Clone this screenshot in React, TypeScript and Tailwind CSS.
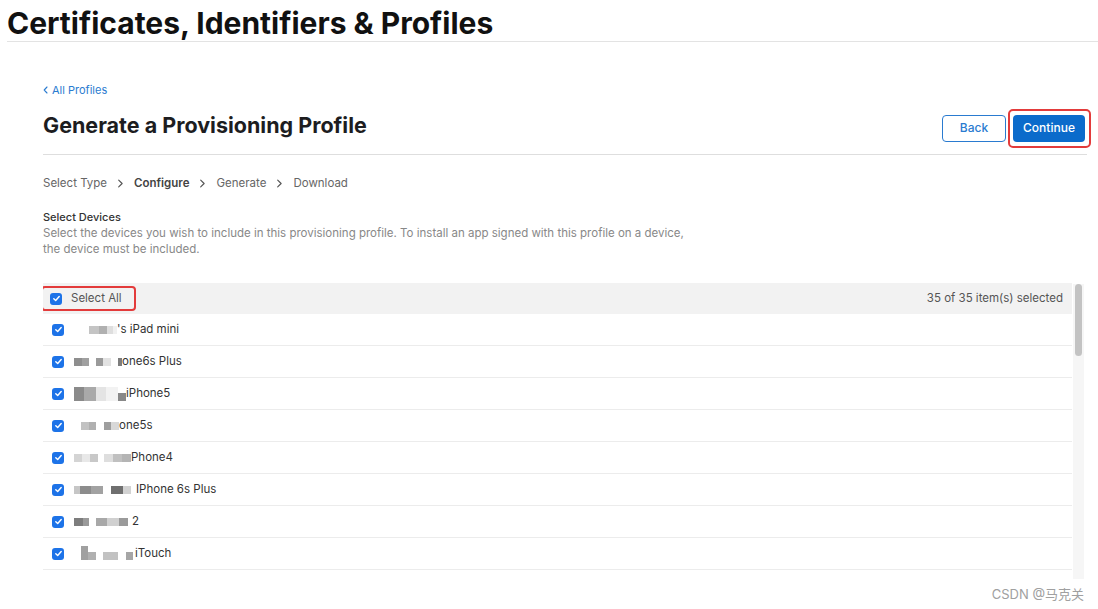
import React from "react";

type Block = { w: number; h?: number; c: string; dy?: number };

// pixelated redaction blocks in front of each device name
const devices: { blocks: Block[]; name: string }[] = [
  { blocks: [{ w: 15, c: "#ffffff" }, { w: 10, c: "#c4c4c4" }, { w: 8, c: "#b0b0b0" }, { w: 6, c: "#dedede" }, { w: 4, c: "#f0f0f0" }], name: "'s iPad mini" },
  { blocks: [{ w: 8, c: "#8e8e8e" }, { w: 7, c: "#a0a0a0" }, { w: 7, c: "#ffffff" }, { w: 7, c: "#9a9a9a" }, { w: 8, c: "#e2e2e2" }, { w: 7, c: "#ffffff" }, { w: 4, c: "#7d7d7d" }], name: "one6s Plus" },
  { blocks: [{ w: 10, h: 14, c: "#8a8a8a" }, { w: 12, h: 14, c: "#a9a9a9" }, { w: 10, h: 14, c: "#e4e4e4" }, { w: 12, h: 14, c: "#f2f2f2" }, { w: 8, h: 8, c: "#888888", dy: 6 }], name: "iPhone5" },
  { blocks: [{ w: 7, c: "#ffffff" }, { w: 8, c: "#c2c2c2" }, { w: 7, c: "#b0b0b0" }, { w: 8, c: "#ffffff" }, { w: 7, c: "#9e9e9e" }, { w: 8, c: "#d8d8d8" }], name: "one5s" },
  { blocks: [{ w: 8, c: "#d4d4d4" }, { w: 8, c: "#e8e8e8" }, { w: 8, c: "#c8c8c8" }, { w: 6, c: "#ffffff" }, { w: 9, c: "#dedede" }, { w: 9, c: "#c0c0c0" }, { w: 9, c: "#b4b4b4" }], name: "Phone4" },
  { blocks: [{ w: 6, c: "#c6c6c6" }, { w: 11, c: "#8c8c8c" }, { w: 12, c: "#a2a2a2" }, { w: 8, c: "#ffffff" }, { w: 12, c: "#6f6f6f" }, { w: 8, c: "#d2d2d2" }, { w: 5, c: "#ffffff" }], name: "IPhone 6s Plus" },
  { blocks: [{ w: 9, c: "#7d7d7d" }, { w: 6, c: "#9a9a9a" }, { w: 7, c: "#ffffff" }, { w: 11, c: "#a8a8a8" }, { w: 12, c: "#d0d0d0" }, { w: 9, c: "#9a9a9a" }, { w: 4, c: "#ffffff" }], name: "2" },
  { blocks: [{ w: 7, c: "#ffffff" }, { w: 7, h: 14, c: "#a0a0a0", dy: -2 }, { w: 8, h: 8, c: "#b0b0b0", dy: 4 }, { w: 7, c: "#ffffff" }, { w: 15, h: 8, c: "#c2c2c2", dy: 4 }, { w: 8, c: "#ffffff" }, { w: 7, h: 8, c: "#a6a6a6", dy: 4 }, { w: 2, c: "#ffffff" }], name: "iTouch" },
  { blocks: [], name: "" },
];

function Check() {
  return (
    <span className="flex h-[12px] w-[12px] shrink-0 items-center justify-center rounded-[3px] bg-[#1d73e8]">
      <svg width="9" height="9" viewBox="0 0 10 10" fill="none">
        <path d="M2 5.2 L4.1 7.2 L8 2.8" stroke="#fff" strokeWidth="1.6" strokeLinecap="round" strokeLinejoin="round" />
      </svg>
    </span>
  );
}

function Chevron() {
  return (
    <svg width="7" height="9" viewBox="0 0 7 10" fill="none" className="mx-[10px]">
      <path d="M1.5 1.2 L5.3 5 L1.5 8.8" stroke="#555" strokeWidth="1.3" strokeLinecap="round" strokeLinejoin="round" />
    </svg>
  );
}

export default function App() {
  return (
    <div className="relative h-[609px] w-[1098px] overflow-hidden bg-white font-['Inter','Noto_Sans_CJK_SC',sans-serif] text-[#1d1d1f]">
      <div className="ml-[7px] border-b border-[#e3e3e3] pb-[1px] pt-[7px]">
        <h1 className="text-[30px] font-bold leading-[33px] text-[#111]">Certificates, Identifiers &amp; Profiles</h1>
      </div>

      <div className="ml-[43px] mr-[11px]">
        <div className="mt-[40px] flex h-[16px] items-center gap-[4px] text-[11px] leading-[16px] text-[#2a7bd0]">
          <svg width="5" height="8" viewBox="0 0 5 8" fill="none">
            <path d="M4 1 L1.2 4 L4 7" stroke="#2a7bd0" strokeWidth="1.1" strokeLinecap="round" strokeLinejoin="round" />
          </svg>
          <span>All Profiles</span>
        </div>

        <div className="mt-[8px] flex h-[49px] items-center justify-between border-b border-[#dedede] pb-[4px]">
          <h2 className="mb-[6px] text-[21.5px] font-bold leading-[28px] text-[#1d1d1f]">Generate a Provisioning Profile</h2>
          <div className="mr-[-4px] flex items-center gap-[2px]">
            <button className="h-[27px] w-[64px] rounded-[4px] border border-[#2a7bd0] bg-white text-[12px] font-medium text-[#2a7bd0]">
              Back
            </button>
            <div className="rounded-[5px] border-2 border-[#e33b3b] py-[4px] pl-[3px] pr-[4px]">
              <button className="block h-[27px] w-[72px] rounded-[4px] bg-[#0b6bcb] text-[12px] font-medium text-white">
                Continue
              </button>
            </div>
          </div>
        </div>

        <div className="mt-[20px] flex h-[16px] items-center text-[11.5px] leading-[16px] text-[#666]">
          <span>Select Type</span>
          <Chevron />
          <span className="font-semibold text-[#444]">Configure</span>
          <Chevron />
          <span>Generate</span>
          <Chevron />
          <span>Download</span>
        </div>

        <div className="mt-[18px] text-[11px] font-medium leading-[16px] text-[#333]">Select Devices</div>
        <p className="text-[11.5px] leading-[16px] text-[#888]">
          Select the devices you wish to include in this provisioning profile. To install an app signed with this
          profile on a device,
          <br />
          the device must be included.
        </p>

        <div className="mt-[26px] flex h-[296px] gap-[1px] overflow-hidden">
          <div className="w-[1029px]">
            <div className="flex h-[31px] items-center justify-between bg-[#f2f2f2] pr-[9px]">
              <div className="ml-[-2px] flex h-[25px] items-center gap-[9px] rounded-[4px] border-2 border-[#e33b3b] pl-[7px] pr-[12px]">
                <Check />
                <span className="text-[11.5px] text-[#555]">Select All</span>
              </div>
              <span className="text-[11.5px] text-[#555]">35 of 35 item(s) selected</span>
            </div>
            {devices.map((d, i) => (
              <div key={i} className="flex h-[32px] shrink-0 items-center border-b border-[#ececec] pl-[9px]">
                <Check />
                <div className="ml-[10px] flex items-start">
                  {d.blocks.map((b, j) => (
                    <span
                      key={j}
                      className="block"
                      style={{ width: b.w, height: b.h ?? 8, background: b.c, marginTop: b.dy ?? 0 }}
                    />
                  ))}
                </div>
                <span className="text-[11.5px] text-[#333]">{d.name}</span>
              </div>
            ))}
          </div>
          <div className="mt-[1px] h-full w-[11px] bg-[#f6f6f6] px-[2px]">
            <div className="h-[72px] w-[7px] rounded-full bg-[#c3c3c3]" />
          </div>
        </div>
      </div>

      <div className="absolute bottom-[5px] right-[14px] text-[13px] text-[#a0a0a0]">CSDN @马克关</div>
    </div>
  );
}
